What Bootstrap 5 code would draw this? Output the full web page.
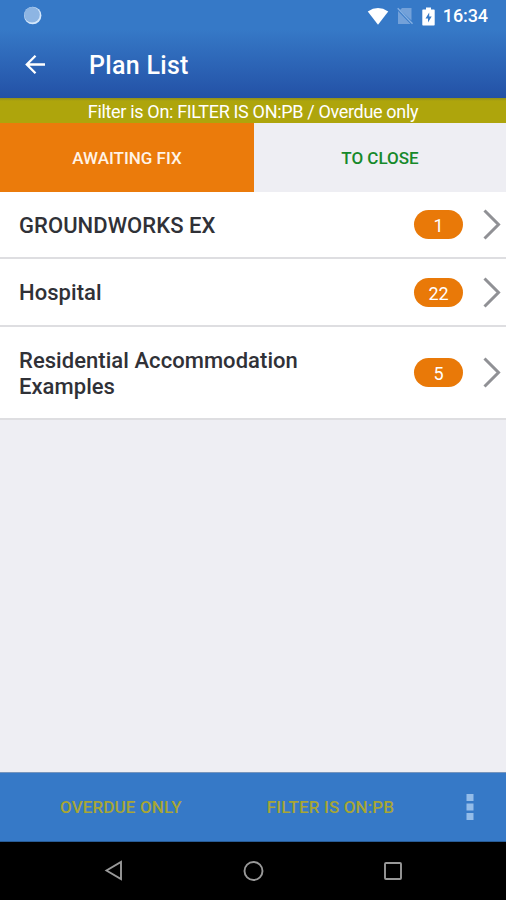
<!DOCTYPE html>
<html lang="en">
<head>
<meta charset="utf-8">
<meta name="viewport" content="width=device-width, initial-scale=1">
<title>Plan List</title>
<link href="https://cdn.jsdelivr.net/npm/bootstrap@5.3.0/dist/css/bootstrap.min.css" rel="stylesheet">
<style>
body{font-family:Roboto,"Liberation Sans",sans-serif;background:#eeeef3;color:#303137;height:900px;overflow:hidden;white-space:nowrap}
svg{display:block;flex:none}
.app-top{height:98px;background:linear-gradient(#3679c7 0,#3679c7 30%,#2351a6 100%)}
.status-bar{height:32px;padding:0 18px 0 23px}
.clock{font-size:18px;font-weight:500;line-height:32px;letter-spacing:-.1px}
.status-icons{gap:8px}
.title-bar{height:66px;padding-left:24px}
.page-title{font-size:25px;font-weight:500;line-height:67px;margin-left:43px;letter-spacing:.3px}
.filter-strip{height:25px;background:linear-gradient(#91901c,#aea50c 3px);font-size:18px;line-height:27px;letter-spacing:-.33px}
.plan-tabs{height:69px;font-size:17px;font-weight:500;line-height:70px}
.tab-on{background:#eb7b0b;color:#fff3e6;width:254px}
.tab-off{color:#16892a}
.plan-row{border:0;border-bottom:2px solid #dedee1!important;border-radius:0!important;padding:0 5px 0 19px;height:68px;color:inherit;background:#fff}
.plan-row:first-child{height:67px}
.plan-row.tall{height:93px}
.plan-name{font-size:22px;line-height:26px;font-weight:500;padding-top:2px;white-space:normal;max-width:320px;letter-spacing:.05px}
.count-pill{width:49px;height:29px;background:#e97908;font-size:18px;font-weight:400;line-height:31px;padding:0;margin-right:20px}
.action-bar{height:70px;background:#3679c7;border-top:1px solid #7695bd;border-bottom:1px solid #285c96;color:#a8a634;font-size:17px;font-weight:500;line-height:70px;padding-left:60px;letter-spacing:.14px}
.second-action{margin-left:85px}
.more{margin-left:auto;margin-right:32px}
.system-nav{height:58px;background:#000;padding:0 103px 0 104px}
</style>
</head>
<body class="d-flex flex-column">
<header class="app-top text-white">
  <div class="status-bar d-flex align-items-center">
    <svg width="20" height="20" viewBox="0 0 20 20"><circle cx="9.7" cy="9.5" r="8.7" fill="#d4e7fb"/><circle cx="9" cy="8.7" r="7.8" fill="#8db5e3"/></svg>
    <div class="status-icons d-flex align-items-center ms-auto">
      <svg width="22" height="19" viewBox="0 0 23 19"><path d="M.8 4.2Q11.5-3 22.2 4.2L11.5 18z" fill="#fff"/></svg>
      <svg width="17" height="18" viewBox="0 0 17 18"><path d="M5 1h9.500v12.500L3 3zM1 4l12.500 13H1z" fill="#73a1d9"/><path d="M.7 1.300 15.500 16.800" stroke="#86b0e2" stroke-width="1.300"/></svg>
      <svg width="13" height="19" viewBox="0 0 13 19"><path d="M4 .5h5v2h3q.7 0 .7.8v14.400q0 .8-.7.8H1q-.7 0-.7-.8V3.300q0-.8.7-.8h3z" fill="#fff"/><path d="M7.200 5.500 3.500 11.500h2.500v4l3.700-6H7.200z" fill="#3679c7"/></svg>
      <span class="clock">16:34</span>
    </div>
  </div>
  <div class="title-bar d-flex align-items-center">
    <svg width="22" height="22" viewBox="0 0 22 22" fill="none" stroke="#fff" stroke-width="2.300"><path d="M21 10.500H3M11.500 1.800 2.800 10.500l8.700 8.700"/></svg>
    <h1 class="page-title mb-0">Plan List</h1>
  </div>
</header>
<div class="filter-strip text-white text-center">Filter is On: FILTER IS ON:PB / Overdue only</div>
<nav class="plan-tabs d-flex text-center">
  <div class="tab-on">AWAITING FIX</div>
  <div class="tab-off flex-grow-1">TO CLOSE</div>
</nav>
<main class="flex-grow-1">
  <div class="list-group list-group-flush">
    <div class="list-group-item plan-row d-flex align-items-center">
      <div class="plan-name me-auto">GROUNDWORKS EX</div><span class="badge rounded-pill count-pill">1</span>
      <svg width="18" height="31" viewBox="0 0 18 31" fill="none" stroke="#909195" stroke-width="3"><path d="M1.500 1.500 15.500 15.500l-14 14"/></svg>
    </div>
    <div class="list-group-item plan-row d-flex align-items-center">
      <div class="plan-name me-auto">Hospital</div><span class="badge rounded-pill count-pill">22</span>
      <svg width="18" height="31" viewBox="0 0 18 31" fill="none" stroke="#909195" stroke-width="3"><path d="M1.500 1.500 15.500 15.500l-14 14"/></svg>
    </div>
    <div class="list-group-item plan-row tall d-flex align-items-center">
      <div class="plan-name me-auto">Residential Accommodation Examples</div><span class="badge rounded-pill count-pill">5</span>
      <svg width="18" height="31" viewBox="0 0 18 31" fill="none" stroke="#909195" stroke-width="3"><path d="M1.500 1.500 15.500 15.500l-14 14"/></svg>
    </div>
  </div>
</main>
<div class="action-bar d-flex align-items-center">
  <span>OVERDUE ONLY</span>
  <span class="second-action">FILTER IS ON:PB</span>
  <svg class="more" width="8" height="26" viewBox="0 0 8 26" fill="#93bce9"><path d="M.5 0h7v7h-7zM.5 9.500h7v7h-7zM.5 19h7v7h-7z"/></svg>
</div>
<footer class="system-nav d-flex align-items-center justify-content-between">
  <svg width="19" height="22" viewBox="0 0 19 22" fill="none" stroke="#999" stroke-width="1.900"><path d="M17 2v17L2.500 10.500z"/></svg>
  <svg width="22" height="22" viewBox="0 0 22 22" fill="none" stroke="#999" stroke-width="1.900"><circle cx="11.500" cy="11" r="9"/></svg>
  <svg width="20" height="20" viewBox="0 0 20 20" fill="none" stroke="#999" stroke-width="1.900"><rect x="2" y="2" width="16" height="16" rx="1"/></svg>
</footer>
<script src="https://cdn.jsdelivr.net/npm/bootstrap@5.3.0/dist/js/bootstrap.bundle.min.js"></script>
</body>
</html>
